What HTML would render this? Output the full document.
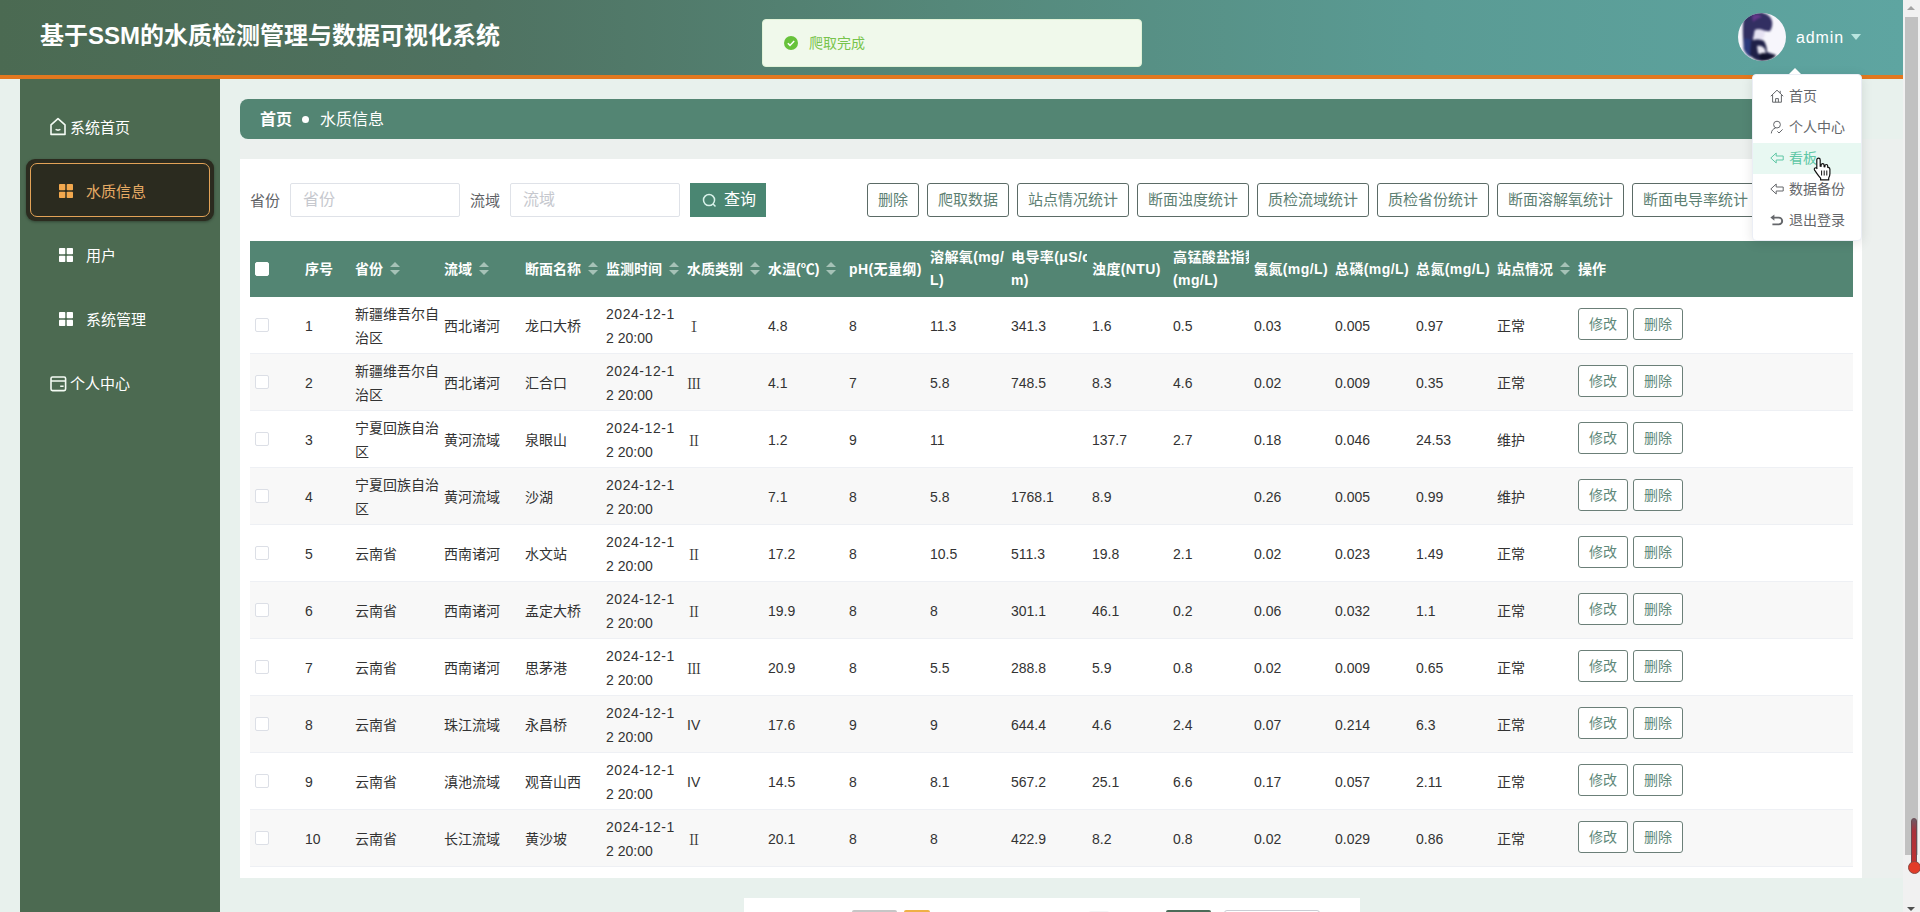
<!DOCTYPE html>
<html lang="zh-CN">
<head>
<meta charset="utf-8">
<title>基于SSM的水质检测管理与数据可视化系统</title>
<style>
*{box-sizing:border-box;margin:0;padding:0}
html,body{width:1920px;height:912px;overflow:hidden}
body{font-family:"Liberation Sans","Noto Sans CJK SC",sans-serif;font-size:14px;color:#333;background:#e8f1ed;position:relative}
.abs{position:absolute}
/* header */
#hdr{position:absolute;left:0;top:0;width:1903px;height:79px;background:linear-gradient(90deg,#4b6a52 0%,#4f7261 25%,#55887a 50%,#5a9b94 75%,#5ea5a1 100%);border-bottom:4px solid #e2781f}
#title{position:absolute;left:40px;top:18px;font-size:24px;font-weight:bold;color:#fff;line-height:36px;white-space:nowrap;letter-spacing:0}
/* toast */
#toast{position:absolute;left:762px;top:19px;width:380px;height:48px;background:#f0f9eb;border:1px solid #e1f3d8;border-radius:4px}
#toast .txt{position:absolute;left:46px;top:13px;font-size:14px;line-height:20px;color:#78c44c}
#toast svg{position:absolute;left:21px;top:16px}
/* user */
#avatar{position:absolute;left:1738px;top:13px;width:48px;height:48px;border-radius:50%;overflow:hidden}
#uname{position:absolute;left:1796px;top:26px;font-size:16px;line-height:24px;color:#fff;letter-spacing:.9px}
#caret{position:absolute;left:1851px;top:34px;width:0;height:0;border-left:5px solid transparent;border-right:5px solid transparent;border-top:6px solid #b9e6e0}
/* sidebar */
#side{position:absolute;left:20px;top:79px;width:200px;height:833px;background:#4c6a51}
.mi{position:absolute;left:0;width:200px;height:64px;color:#fff;font-size:15px;line-height:64px;white-space:nowrap}
.mi svg{position:absolute}
.mi span{position:absolute;top:1px}
#active{position:absolute;left:6px;top:80px;width:188px;height:62px;background:#2b2b1f;border-radius:9px;box-shadow:0 1px 3px rgba(0,0,0,.35)}
#active:after{content:"";position:absolute;left:4px;top:4px;right:4px;bottom:4px;border:1px solid #e2a257;border-radius:7px}
/* breadcrumb */
#bc{position:absolute;left:240px;top:99px;width:1622px;height:40px;background:#538573;border-radius:8px 0 0 8px;color:#fff;font-size:16px;line-height:42px}
#bc b{position:absolute;left:20px}
#bc i{position:absolute;left:62px;top:17px;width:7px;height:7px;border-radius:50%;background:#fff}
#bc span{position:absolute;left:80px}
/* card */
#card{position:absolute;left:240px;top:159px;width:1622px;height:719px;background:#fff}
.lbl{position:absolute;top:184px;font-size:15px;line-height:34px;color:#606266}
.inp{position:absolute;top:183px;width:170px;height:34px;border:1px solid #dfe2e8;border-radius:2px;background:#fff;font-size:16px;line-height:32px;color:#c6c8ce;padding-left:12px}
#qry{position:absolute;left:690px;top:183px;width:76px;height:34px;background:#4a8672;color:#fff;font-size:16px;line-height:34px}
#qry svg{position:absolute;left:12px;top:10px}
#qry span{position:absolute;left:34px;top:0}
.ob{position:absolute;top:183px;height:34px;border:1px solid #5b6b66;border-radius:3px;background:#fff;color:#5d7f73;font-size:15px;line-height:32px;text-align:center;white-space:nowrap}
/* table */
table{position:absolute;left:250px;top:241px;width:1603px;border-collapse:separate;border-spacing:0;table-layout:fixed}
th{background:#538573;color:#fff;font-size:14px;font-weight:bold;text-align:left;height:56px;padding:0 0 0 5px;line-height:23px;overflow:hidden;white-space:nowrap;vertical-align:middle;position:relative}
td{height:57px;padding:2px 0 0 5px;font-size:14px;line-height:24px;color:#333;border-bottom:1px solid #eef0f4;vertical-align:middle;white-space:nowrap;overflow:hidden}
tr:nth-child(even) td{background:#f8f8f8}
.cb{display:block;width:14px;height:14px;border:1px solid #dcdfe6;border-radius:2px;background:#fff;position:relative;top:-1px}
th .cb{top:0}
th .cb{border-color:#fff}
.so{display:inline-block;position:relative;width:10px;height:14px;margin-left:7px;vertical-align:-2px}
.so:before,.so:after{content:"";position:absolute;left:0;border-left:5px solid transparent;border-right:5px solid transparent}
.so:before{top:0;border-bottom:5px solid #a6c2b7}
.so:after{top:8px;border-top:5px solid #a6c2b7}
.ops{height:32px;position:relative;top:-2px}
.btn{float:left;width:50px;height:32px;border:1px solid #6b7f78;border-radius:3px;color:#5e897a;font-size:14px;line-height:30px;text-align:center;background:#fff;margin-right:5px}
.tm{letter-spacing:.55px}
.la{letter-spacing:.4px}
.rn{font-family:"Noto Serif CJK SC","Liberation Serif",serif}
/* dropdown */
#dd{position:absolute;left:1752px;top:74px;width:110px;height:167px;background:#fff;border:1px solid #ebeef5;border-radius:4px;box-shadow:0 2px 12px rgba(0,0,0,.1)}
.di{position:absolute;left:0;width:108px;height:31px;font-size:14px;line-height:31px;color:#65676b;white-space:nowrap}
.di svg{position:absolute;left:17px;top:8px}
.di span{position:absolute;left:36px}
/* pagination */
#pg{position:absolute;left:744px;top:898px;width:616px;height:40px;background:#fff}
/* scrollbar */
#sb{position:absolute;left:1903px;top:0;width:17px;height:912px;background:#f1f1f1}
#sb .th{position:absolute;left:2px;top:17px;width:13px;height:838px;background:#c1c1c1}
</style>
</head>
<body>
<div id="hdr">
  <div id="title">基于SSM的水质检测管理与数据可视化系统</div>
  <div id="toast"><svg width="14" height="14" viewBox="0 0 14 14"><circle cx="7" cy="7" r="7" fill="#67c23a"/><path d="M3.8 7.2l2.2 2.2 4.2-4.4" stroke="#fff" stroke-width="1.5" fill="none"/></svg><div class="txt">爬取完成</div></div>
  <div id="avatar"><svg width="48" height="48" viewBox="0 0 48 48"><rect width="48" height="48" fill="#f7f6fc"/><g style="filter:blur(1.1px)"><path d="M6 4C12-2 26-3 32 4c3 4 3 9 0 14-2 1-4-1-6 0-3-1-6-2-9-1-1 4-2 8-2 12l-1 14c-3-1-6-4-8-8C5 28 4 14 6 4Z" fill="#322f62"/><path d="M6 26c3-1 6 0 8 2l-1 16c-3-1-6-4-7.500000000000001-8Z" fill="#2c3a7c"/><path d="M14 3c3-3 8-2 10 1-4 1-7 3-9 5Z" fill="#64388a"/><path d="M17 17c3-1 7-1 10 1 0 4-1 7-3 9-3 0-6 0-9 1Z" fill="#e6e2f2"/><path d="M13 28c4-2 9-2 13 0 2 3 3 7 3 11l9 3c-3 4-8 6-14 6-5 0-9-2-12-6Z" fill="#1f2048"/><path d="M19 33c3-1 6 0 8 3l1 5c-3 1-6 1-8-1Z" fill="#eceaf4"/><path d="M21 42c3-3 8-2 10 0l7 0c-3 4-9 6-15 5Z" fill="#11122c"/></g></svg></div>
  <div id="uname">admin</div>
  <div id="caret"></div>
</div>

<div id="side">
  <div id="active"></div>
  <div class="mi" style="top:16px"><svg style="left:29px;top:22px" width="18" height="19" viewBox="0 0 18 19" fill="none" stroke="#f4fbf4" stroke-width="1.6"><path d="M2 7.8L9 1.6l7 6.2V17.4H2Z" stroke-linejoin="round"/><path d="M6.6 12.4q2.4 1.4 4.8 0"/></svg><span style="left:50px">系统首页</span></div>
  <div class="mi" style="top:80px;color:#e6aa64"><svg style="left:39px;top:25px" width="14" height="14" viewBox="0 0 14 14" fill="#f2a84e"><rect x="0" y="0" width="6.3" height="6.3" rx=".8"/><rect x="7.7" y="0" width="6.3" height="6.3" rx=".8"/><rect x="0" y="7.7" width="6.3" height="6.3" rx=".8"/><rect x="7.7" y="7.7" width="6.3" height="6.3" rx=".8"/></svg><span style="left:66px">水质信息</span></div>
  <div class="mi" style="top:144px"><svg style="left:39px;top:25px" width="14" height="14" viewBox="0 0 14 14" fill="#fff"><rect x="0" y="0" width="6.3" height="6.3" rx=".8"/><rect x="7.7" y="0" width="6.3" height="6.3" rx=".8"/><rect x="0" y="7.7" width="6.3" height="6.3" rx=".8"/><rect x="7.7" y="7.7" width="6.3" height="6.3" rx=".8"/></svg><span style="left:66px">用户</span></div>
  <div class="mi" style="top:208px"><svg style="left:39px;top:25px" width="14" height="14" viewBox="0 0 14 14" fill="#fff"><rect x="0" y="0" width="6.3" height="6.3" rx=".8"/><rect x="7.7" y="0" width="6.3" height="6.3" rx=".8"/><rect x="0" y="7.7" width="6.3" height="6.3" rx=".8"/><rect x="7.7" y="7.7" width="6.3" height="6.3" rx=".8"/></svg><span style="left:66px">系统管理</span></div>
  <div class="mi" style="top:272px"><svg style="left:29.5px;top:25px" width="17" height="16" viewBox="0 0 17 16" fill="none" stroke="#f4fbf4" stroke-width="1.6"><rect x="1" y="1" width="14.6" height="13.6" rx="1.5"/><path d="M1 5h14.6M10.2 10.2h3.4"/></svg><span style="left:50px">个人中心</span></div>
</div>

<div id="bc"><b>首页</b><i></i><span>水质信息</span></div>
<div style="position:absolute;left:240px;top:139px;width:1663px;height:739px;background:#ecf0ee"></div>
<div id="card"></div>

<div class="lbl" style="left:250px">省份</div>
<div class="inp" style="left:290px">省份</div>
<div class="lbl" style="left:470px">流域</div>
<div class="inp" style="left:510px">流域</div>
<div id="qry"><svg width="15" height="15" viewBox="0 0 16 16" fill="none" stroke="#d8f2ea" stroke-width="1.6"><circle cx="7.5" cy="7.5" r="5.9"/><path d="M11.8 11.8l2.6 2.6"/></svg><span>查询</span></div>

<div class="ob" style="left:867px;width:52px">删除</div>
<div class="ob" style="left:927px;width:82px">爬取数据</div>
<div class="ob" style="left:1017px;width:112px">站点情况统计</div>
<div class="ob" style="left:1137px;width:112px">断面浊度统计</div>
<div class="ob" style="left:1257px;width:112px">质检流域统计</div>
<div class="ob" style="left:1377px;width:112px">质检省份统计</div>
<div class="ob" style="left:1497px;width:127px">断面溶解氧统计</div>
<div class="ob" style="left:1632px;width:127px">断面电导率统计</div>

<table>
<colgroup><col style="width:50px"><col style="width:50px"><col style="width:89px"><col style="width:81px"><col style="width:81px"><col style="width:81px"><col style="width:81px"><col style="width:81px"><col style="width:81px"><col style="width:81px"><col style="width:81px"><col style="width:81px"><col style="width:81px"><col style="width:81px"><col style="width:81px"><col style="width:81px"><col style="width:81px"><col style="width:280px"></colgroup>
<thead><tr>
<th><span class="cb"></span></th><th>序号</th><th>省份<span class="so"></span></th><th>流域<span class="so"></span></th><th>断面名称<span class="so"></span></th><th>监测时间<span class="so"></span></th><th>水质类别<span class="so"></span></th><th>水温(℃)<span class="so"></span></th><th class="la">pH(无量纲)</th><th class="la">溶解氧(mg/<br>L)</th><th class="la">电导率(μS/c<br>m)</th><th class="la">浊度(NTU)</th><th class="la">高锰酸盐指数<br>(mg/L)</th><th class="la">氨氮(mg/L)</th><th class="la">总磷(mg/L)</th><th class="la">总氮(mg/L)</th><th>站点情况<span class="so"></span></th><th>操作</th>
</tr></thead>
<tbody>
<tr><td><span class="cb"></span></td><td>1</td><td>新疆维吾尔自<br>治区</td><td>西北诸河</td><td>龙口大桥</td><td><span class="tm">2024-12-1</span><br>2 20:00</td><td><span class="rn">Ⅰ</span></td><td>4.8</td><td>8</td><td>11.3</td><td>341.3</td><td>1.6</td><td>0.5</td><td>0.03</td><td>0.005</td><td>0.97</td><td>正常</td><td><div class="ops"><span class="btn">修改</span><span class="btn">删除</span></div></td></tr>
<tr><td><span class="cb"></span></td><td>2</td><td>新疆维吾尔自<br>治区</td><td>西北诸河</td><td>汇合口</td><td><span class="tm">2024-12-1</span><br>2 20:00</td><td><span class="rn">Ⅲ</span></td><td>4.1</td><td>7</td><td>5.8</td><td>748.5</td><td>8.3</td><td>4.6</td><td>0.02</td><td>0.009</td><td>0.35</td><td>正常</td><td><div class="ops"><span class="btn">修改</span><span class="btn">删除</span></div></td></tr>
<tr><td><span class="cb"></span></td><td>3</td><td>宁夏回族自治<br>区</td><td>黄河流域</td><td>泉眼山</td><td><span class="tm">2024-12-1</span><br>2 20:00</td><td><span class="rn">Ⅱ</span></td><td>1.2</td><td>9</td><td>11</td><td></td><td>137.7</td><td>2.7</td><td>0.18</td><td>0.046</td><td>24.53</td><td>维护</td><td><div class="ops"><span class="btn">修改</span><span class="btn">删除</span></div></td></tr>
<tr><td><span class="cb"></span></td><td>4</td><td>宁夏回族自治<br>区</td><td>黄河流域</td><td>沙湖</td><td><span class="tm">2024-12-1</span><br>2 20:00</td><td></td><td>7.1</td><td>8</td><td>5.8</td><td>1768.1</td><td>8.9</td><td></td><td>0.26</td><td>0.005</td><td>0.99</td><td>维护</td><td><div class="ops"><span class="btn">修改</span><span class="btn">删除</span></div></td></tr>
<tr><td><span class="cb"></span></td><td>5</td><td>云南省</td><td>西南诸河</td><td>水文站</td><td><span class="tm">2024-12-1</span><br>2 20:00</td><td><span class="rn">Ⅱ</span></td><td>17.2</td><td>8</td><td>10.5</td><td>511.3</td><td>19.8</td><td>2.1</td><td>0.02</td><td>0.023</td><td>1.49</td><td>正常</td><td><div class="ops"><span class="btn">修改</span><span class="btn">删除</span></div></td></tr>
<tr><td><span class="cb"></span></td><td>6</td><td>云南省</td><td>西南诸河</td><td>孟定大桥</td><td><span class="tm">2024-12-1</span><br>2 20:00</td><td><span class="rn">Ⅱ</span></td><td>19.9</td><td>8</td><td>8</td><td>301.1</td><td>46.1</td><td>0.2</td><td>0.06</td><td>0.032</td><td>1.1</td><td>正常</td><td><div class="ops"><span class="btn">修改</span><span class="btn">删除</span></div></td></tr>
<tr><td><span class="cb"></span></td><td>7</td><td>云南省</td><td>西南诸河</td><td>思茅港</td><td><span class="tm">2024-12-1</span><br>2 20:00</td><td><span class="rn">Ⅲ</span></td><td>20.9</td><td>8</td><td>5.5</td><td>288.8</td><td>5.9</td><td>0.8</td><td>0.02</td><td>0.009</td><td>0.65</td><td>正常</td><td><div class="ops"><span class="btn">修改</span><span class="btn">删除</span></div></td></tr>
<tr><td><span class="cb"></span></td><td>8</td><td>云南省</td><td>珠江流域</td><td>永昌桥</td><td><span class="tm">2024-12-1</span><br>2 20:00</td><td>IV</td><td>17.6</td><td>9</td><td>9</td><td>644.4</td><td>4.6</td><td>2.4</td><td>0.07</td><td>0.214</td><td>6.3</td><td>正常</td><td><div class="ops"><span class="btn">修改</span><span class="btn">删除</span></div></td></tr>
<tr><td><span class="cb"></span></td><td>9</td><td>云南省</td><td>滇池流域</td><td>观音山西</td><td><span class="tm">2024-12-1</span><br>2 20:00</td><td>IV</td><td>14.5</td><td>8</td><td>8.1</td><td>567.2</td><td>25.1</td><td>6.6</td><td>0.17</td><td>0.057</td><td>2.11</td><td>正常</td><td><div class="ops"><span class="btn">修改</span><span class="btn">删除</span></div></td></tr>
<tr><td><span class="cb"></span></td><td>10</td><td>云南省</td><td>长江流域</td><td>黄沙坡</td><td><span class="tm">2024-12-1</span><br>2 20:00</td><td><span class="rn">Ⅱ</span></td><td>20.1</td><td>8</td><td>8</td><td>422.9</td><td>8.2</td><td>0.8</td><td>0.02</td><td>0.029</td><td>0.86</td><td>正常</td><td><div class="ops"><span class="btn">修改</span><span class="btn">删除</span></div></td></tr>
</tbody>
</table>

<div id="dd">
  <div class="di" style="top:6px"><svg width="14" height="14" viewBox="0 0 14 14" fill="none" stroke="currentColor" stroke-width="1"><path d="M0.8 7.2L7 1.2l6.2 6"/><path d="M2.6 6v7.2h8.8V6"/><path d="M5.6 13.2V9.6h2.8v3.6"/><path d="M10.2 4.2V1.8"/></svg><span>首页</span></div>
  <div class="di" style="top:37px"><svg width="14" height="14" viewBox="0 0 14 14" fill="none" stroke="currentColor" stroke-width="1"><circle cx="7" cy="4.6" r="3.4"/><path d="M1.3 13.4c.2-3 2-4.8 4.2-5.2"/><path d="M7.4 11.4l1.6 1.6 3.6-3.6"/></svg><span>个人中心</span></div>
  <div class="di" style="top:68px;background:#e8f8f2;color:#5fc7a5"><svg width="14" height="14" viewBox="0 0 14 14" fill="none" stroke="currentColor" stroke-width="1" stroke-linejoin="round"><path d="M0.8 7L6.2 2v3H13.2v4H6.2v3Z"/></svg><span>看板</span></div>
  <div class="di" style="top:99px"><svg width="14" height="14" viewBox="0 0 14 14" fill="none" stroke="currentColor" stroke-width="1" stroke-linejoin="round"><path d="M0.8 7L6.2 2v3H13.2v4H6.2v3Z"/></svg><span>数据备份</span></div>
  <div class="di" style="top:130px"><svg width="14" height="14" viewBox="0 0 14 14" fill="none" stroke="currentColor" stroke-width="1.9"><path d="M3 4.6h5.8a3.4 3.4 0 0 1 0 6.8H2.4"/><path d="M0.4 4.6L4.4 1.4v6.4Z" fill="currentColor" stroke="none"/></svg><span>退出登录</span></div>
</div>

<div style="position:absolute;left:1789px;top:68px;width:0;height:0;border-left:6px solid transparent;border-right:6px solid transparent;border-bottom:6px solid #fff"></div>
<svg style="position:absolute;left:1813px;top:157px" width="19" height="24" viewBox="0 0 19 24"><path d="M5.5 1.2c1 0 1.7.7 1.7 1.7v6.3l.9.1V8.2c0-.9.7-1.5 1.5-1.5s1.5.6 1.5 1.5v1.5l.8.1v-.9c0-.8.6-1.4 1.4-1.4s1.4.6 1.4 1.4v1.400000000000001l.7.1c.9.2 1.500000000000001.9 1.500000000000001 1.800000000000001v4.6c0 1.8-.5 3-1.2 4.2v1.9H7.6v-1.7c-1.2-1.4-2.4-2.7-3.600000000000001-4.600000000000001L1.6 13.1c-.5-.8-.3-1.700000000000001.4-2.1.7-.4 1.500000000000001-.2 2 .4l-.2.1V2.9c0-1 .7-1.700000000000001 1.700000000000001-1.700000000000001Z" fill="#fff" stroke="#111" stroke-width="1.2" stroke-linejoin="round"/><path d="M8.6 13.5v5M11.2 13.5v5M13.8 13.5v5" stroke="#111" stroke-width="1"/></svg>
<div id="pg"><div style="position:absolute;left:108px;top:12px;width:45px;height:28px;background:#c6c6c6;border-radius:2px"></div><div style="position:absolute;left:160px;top:12px;width:26px;height:28px;background:#efb045;border-radius:2px"></div><div style="position:absolute;left:345px;top:13px;width:20px;height:28px;background:#f4f4f5;border-radius:2px"></div><div style="position:absolute;left:422px;top:12px;width:45px;height:28px;background:#4b6b58;border-radius:2px"></div><div style="position:absolute;left:480px;top:12px;width:96px;height:28px;border:1px solid #c9cdd4;border-radius:3px"></div></div>
<div id="sb"><div class="th"></div><div style="position:absolute;left:4px;top:6px;width:0;height:0;border-left:4px solid transparent;border-right:4px solid transparent;border-bottom:4px solid #a3a3a3"></div><div style="position:absolute;left:4px;top:907px;width:0;height:0;border-left:4px solid transparent;border-right:4px solid transparent;border-top:4px solid #505050"></div><div style="position:absolute;left:8px;top:818px;width:6px;height:46px;background:linear-gradient(180deg,#6b5a66 0,#a8323c 12px,#c03030 100%);border:1px solid #6b4a52;border-radius:3px 3px 0 0"></div><div style="position:absolute;left:5px;top:861px;width:13px;height:13px;border-radius:50%;background:#e23c28;border:1px solid #8a4a44"></div></div>
</body>
</html>
